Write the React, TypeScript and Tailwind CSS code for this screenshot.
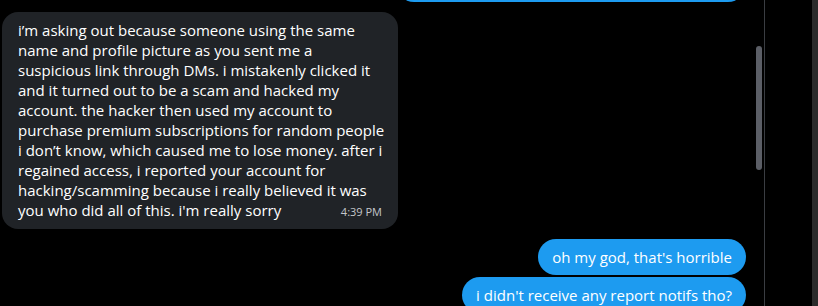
import React from 'react';

const lines = [
  'i’m asking out because someone using the same',
  'name and profile picture as you sent me a',
  'suspicious link through DMs. i mistakenly clicked it',
  'and it turned out to be a scam and hacked my',
  'account. the hacker then used my account to',
  'purchase premium subscriptions for random people',
  'i don’t know, which caused me to lose money. after i',
  'regained access, i reported your account for',
  'hacking/scamming because i really believed it was',
];

export default function App() {
  return (
    <div
      className="flex h-[306px] w-[818px] overflow-hidden bg-black text-white"
      style={{ fontFamily: '"Open Sans", "Noto Sans", sans-serif' }}
    >
      {/* conversation */}
      <div className="relative w-[764px]">
        <div className="flex flex-col pl-[2px] pr-[18px]">
          <div className="-mt-[34px] flex justify-end">
            <div className="h-[36px] w-[350px] rounded-[18px] bg-[#1d9bf0]" />
          </div>

          <div className="mt-[10px] w-[396px] rounded-2xl bg-[#202327] px-[16px] pt-[8px] pb-[7px] text-[15px] leading-[20px]">
            {lines.map((line, i) => (
              <div key={i} className="whitespace-nowrap">
                {line}
              </div>
            ))}
            <div className="flex items-baseline justify-between whitespace-nowrap">
              <span>you who did all of this. i'm really sorry</span>
              <span className="text-[11px] text-[#c4c7cb]">4:39 PM</span>
            </div>
          </div>

          <div className="mt-[10px] flex justify-end">
            <div className="flex h-[36px] items-center rounded-[18px] bg-[#1d9bf0] px-[14px] text-[15px] whitespace-nowrap">
              oh my god, that's horrible
            </div>
          </div>
          <div className="mt-[2px] flex justify-end">
            <div className="flex h-[36px] items-center rounded-[18px] bg-[#1d9bf0] px-[14px] text-[15px] whitespace-nowrap">
              i didn't receive any report notifs tho?
            </div>
          </div>
        </div>

        {/* scrollbar thumb */}
        <div className="absolute top-[46px] left-[756px] h-[124px] w-[6px] rounded-full bg-[#5b5e66]" />
      </div>

      <div className="w-px bg-[#3a3d42]" />
      <div className="flex-1" />
      <div className="w-[6px] bg-[#2b2b2b]" />
    </div>
  );
}
